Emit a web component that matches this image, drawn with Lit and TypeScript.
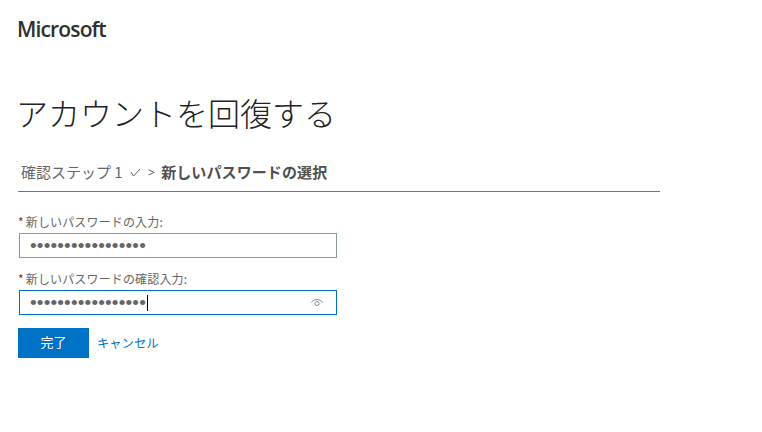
import { LitElement, html, css } from 'lit';
import { customElement } from 'lit/decorators.js';

const DOTS = '•'.repeat(17);

@customElement('app-root')
export class AppRoot extends LitElement {
  static styles = css`
    :host {
      display: block;
      width: 762px;
      height: 432px;
      overflow: hidden;
      background: #fff;
      box-sizing: border-box;
      padding: 15px 0 0 18px;
      color: #323130;
      font-family: 'Open Sans', 'Noto Sans CJK JP', sans-serif;
    }
    .logo {
      margin-left: -1px;
      font-size: 21px;
      line-height: 28px;
      font-weight: 600;
      letter-spacing: -0.85px;
      color: #2f2f2f;
    }
    h1 {
      margin: 47px 0 0 -2px;
      font-size: 32px;
      line-height: 44px;
      font-weight: 300;
      color: #222;
      font-family: 'Noto Sans CJK JP', sans-serif;
    }
    .steps {
      width: 642px;
      box-sizing: border-box;
      height: 46px;
      margin-top: 12px;
      padding: 5px 0 0 3px;
      display: flex;
      align-items: center;
      border-bottom: 1px solid #767676;
      font-family: 'Noto Sans CJK JP', sans-serif;
      font-size: 15px;
      color: #666;
    }
    .steps svg {
      margin: 2px 7px 0 7px;
    }
    .steps .sep {
      font-size: 13px;
      line-height: 20px;
      padding-top: 2px;
      margin-right: 6px;
      font-family: 'Open Sans', sans-serif;
    }
    .steps b {
      color: #505050;
      font-weight: 700;
      letter-spacing: 0.1px;
    }
    .field-label {
      font-family: 'Noto Sans CJK JP', sans-serif;
      font-size: 12px;
      line-height: 17px;
      letter-spacing: 0.15px;
      color: #666;
    }
    .field-label i {
      color: #a4262c;
      font-style: normal;
      margin-right: 2px;
    }
    .first {
      margin-top: 21px;
    }
    .second {
      margin-top: 12px;
    }
    .input {
      display: flex;
      align-items: center;
      box-sizing: border-box;
      width: 318px;
      height: 25px;
      margin: 3px 0 0 1px;
      padding: 0 13px 0 10px;
      border: 1px solid #859ca0;
      background: #fff;
    }
    .input.focus {
      border-color: #0072c6;
    }
    .dots {
      font-family: 'Liberation Sans', sans-serif;
      font-size: 19px;
      line-height: 23px;
      letter-spacing: 0.17px;
      color: #666;
    }
    .caret {
      width: 1px;
      height: 16px;
      margin-left: 1px;
      background: #000;
    }
    .eye {
      margin-left: auto;
    }
    .actions {
      display: flex;
      align-items: center;
      gap: 8px;
      margin-top: 13px;
      font-family: 'Noto Sans CJK JP', sans-serif;
      font-size: 13px;
    }
    button {
      width: 71px;
      height: 30px;
      padding: 0 0 3px;
      border: 0;
      background: #0072c6;
      color: #fff;
      font: inherit;
    }
    a {
      color: #0072c6;
      font-size: 12.3px;
      text-decoration: none;
    }
  `;

  render() {
    return html`
      <div class="logo">Microsoft</div>
      <h1>アカウントを回復する</h1>
      <div class="steps">
        <span>確認ステップ 1</span>
        <svg width="11" height="9" viewBox="0 0 11 9" fill="none" stroke="#666" stroke-width="1">
          <path d="M1 4 L3.5 8 L10 1" />
        </svg>
        <span class="sep">&gt;</span>
        <b>新しいパスワードの選択</b>
      </div>
      <div class="field-label first"><i>*</i>新しいパスワードの入力:</div>
      <div class="input"><span class="dots">${DOTS}</span></div>
      <div class="field-label second"><i>*</i>新しいパスワードの確認入力:</div>
      <div class="input focus">
        <span class="dots">${DOTS}</span>
        <span class="caret"></span>
        <svg class="eye" width="12" height="9" viewBox="0 0 12 9" fill="none" stroke="#8a8a8a" stroke-width="1">
          <path d="M0.5 4.5 A6.5 6.5 0 0 1 11.5 4.5" />
          <circle cx="6" cy="5.5" r="2" />
        </svg>
      </div>
      <div class="actions">
        <button>完了</button>
        <a href="#">キャンセル</a>
      </div>
    `;
  }
}
